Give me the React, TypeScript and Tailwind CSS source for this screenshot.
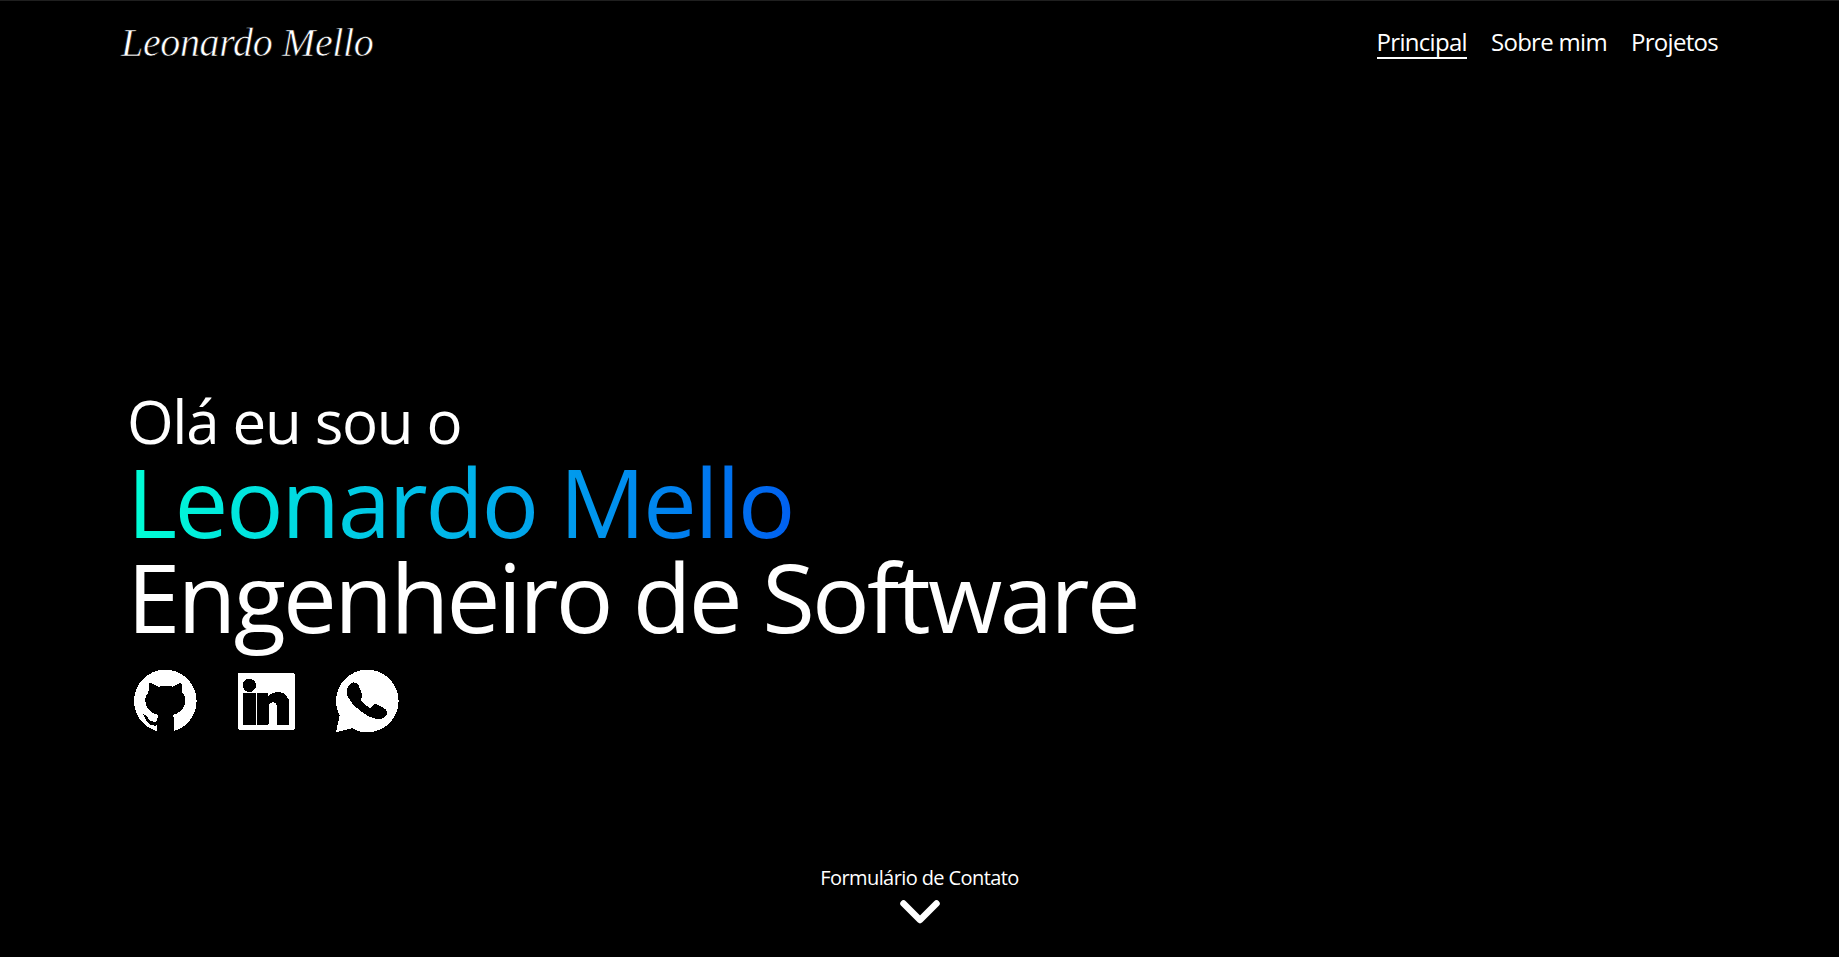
const sans = "font-['Open_Sans',_'Noto_Sans',_sans-serif]";

function Github() {
  return (
    <svg viewBox="0 0 228 228" className="w-[76px] h-[76px]" shapeRendering="crispEdges">
      <circle cx="112" cy="111" r="94" fill="white" />
      <path fill="black" d="M65 55 L92 68 Q112 63 135 68 L160 55 L163 85 Q173 98 172 112 C170 135 155 148 133 153 Q138 160 138 170 V210 H88 V184 C74 187 62 182 55 170 C52 163 48 155 45 150 C52 150 57 156 61 163 C66 172 76 175 87 172 L87 165 L92 153 C70 148 54 135 52 112 Q51 98 61 85 Z" />
    </svg>
  );
}

function Linkedin() {
  return (
    <svg viewBox="0 0 228 228" className="w-[76px] h-[76px]" shapeRendering="crispEdges">
      <rect x="18" y="26" width="170" height="171" rx="4" fill="white" />
      <circle cx="52" cy="64" r="20" fill="black" />
      <rect x="33" y="86" width="39" height="97" rx="4" fill="black" />
      <path fill="black" d="M78 86 H108 V96 C115 88 125 84 138 84 C160 84 172 100 172 122 V178 Q172 183 167 183 H140 Q135 183 135 178 V128 C135 120 130 115 122 115 C115 115 110 120 110 128 V178 Q110 183 105 183 H80 Q75 183 75 178 V90 Q75 86 78 86 Z" />
    </svg>
  );
}

function Whatsapp() {
  return (
    <svg viewBox="0 0 228 228" className="w-[76px] h-[76px]" shapeRendering="crispEdges">
      <circle cx="112" cy="111" r="94" fill="white" />
      <path fill="white" d="M30 150 L18 205 L70 192 Z" />
      <path fill="black" d="M66 56 C74 54 82 56 85 62 L97 92 C99 98 96 103 91 108 C99 118 110 128 122 133 C127 128 132 120 138 120 L166 135 C172 138 173 145 170 151 C164 162 152 167 140 165 C110 160 70 130 54 100 C47 85 50 65 66 56 Z" />
    </svg>
  );
}

export default function App() {
  return (
    <div className={`h-[957px] overflow-hidden bg-black text-white border-t border-[#1f1f1f] flex flex-col ${sans}`}>
      <header className="flex items-center justify-between pl-[121px] pr-[121px] h-[84px] shrink-0">
        <div className="font-['Liberation_Serif',_serif] italic text-[40px] leading-[48px] tracking-[-0.35px] font-normal [-webkit-text-stroke:0.6px_black]">Leonardo Mello</div>
        <nav className="flex gap-6 text-[24px] leading-[32px] tracking-[-0.7px]">
          <a className="border-b-2 border-white leading-[30px]">Principal</a>
          <a className="leading-[30px]">Sobre mim</a>
          <a className="leading-[30px]">Projetos</a>
        </nav>
      </header>
      <main className="flex-1 flex flex-col pl-[127px] pt-[304px]">
        <div className="text-[60px] leading-[64px] tracking-[-1.3px]">Olá eu sou o</div>
        <div className="text-[96px] leading-[95px] tracking-[-2.5px] font-normal bg-gradient-to-r from-[#00ffd5] to-[#0060f0] bg-clip-text text-transparent w-fit">Leonardo Mello</div>
        <div className="text-[96px] leading-[96px] tracking-[-2.75px] font-normal">Engenheiro de Software</div>
        <div className="flex items-center mt-[20px] ml-[1px]">
          <Github />
          <div className="ml-[28px]"><Linkedin /></div>
          <div className="ml-[22px]"><Whatsapp /></div>
        </div>
      </main>
      <footer className="shrink-0 flex flex-col items-center pb-[33px]">
        <div className="text-[20px] leading-[26px] tracking-[-0.6px]">Formulário de Contato</div>
        <svg viewBox="0 0 40 24" className="w-[40px] h-[24px] mt-[9px]" fill="none" stroke="white" strokeWidth="6.5" strokeLinecap="round" strokeLinejoin="round"><path d="M3.5 3.5 L20 20 L36.5 3.5" /></svg>
      </footer>
    </div>
  );
}
